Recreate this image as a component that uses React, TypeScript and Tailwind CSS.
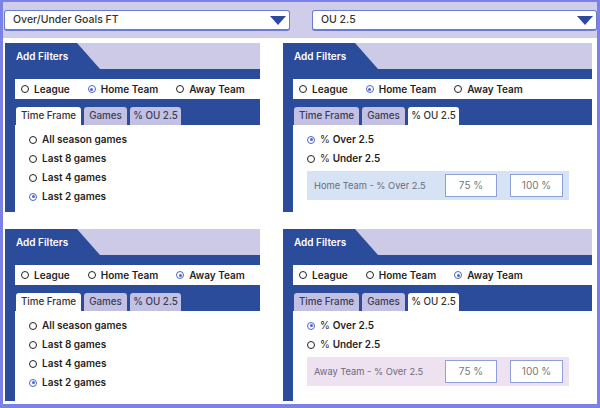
import React from "react";

function Radio({ checked }: { checked?: boolean }) {
  return checked ? (
    <span className="w-[8px] h-[8px] rounded-full border-[1.5px] border-[#4a67c6] flex items-center justify-center shrink-0">
      <span className="w-[3px] h-[3px] rounded-full bg-[#4a67c6]" />
    </span>
  ) : (
    <span className="w-[8px] h-[8px] rounded-full border-[1.5px] border-[#222] shrink-0" />
  );
}

function Select({ label, className }: { label: string; className: string }) {
  return (
    <div
      className={`h-[21px] bg-white rounded-[3px] border border-[#6b7bd3] border-b-2 flex items-center justify-between pl-[8px] pr-[3px] ${className}`}
    >
      <span className="text-[10.5px] font-medium text-[#333]">{label}</span>
      <svg width="16" height="9" viewBox="0 0 16 9">
        <polygon points="0,0 16,0 8,9" fill="#2d4a9e" />
      </svg>
    </div>
  );
}

type PanelProps = {
  team: "home" | "away";
  tab: "time" | "ou";
  className: string;
};

function Panel({ team, tab, className }: PanelProps) {
  const teamName = team === "home" ? "Home Team" : "Away Team";
  const tabs = [
    { id: "time", label: "Time Frame", w: "w-[65px]" },
    { id: "games", label: "Games", w: "w-[43px]" },
    { id: "ou", label: "% OU 2.5", w: "w-[51px]" },
  ];
  return (
    <div className={`flex flex-col ${className}`}>
      <div className="h-[26px] bg-[#cccae6] flex shrink-0">
        <div className="w-[95px] h-full bg-[#2b4b9b] [clip-path:polygon(0_0,72px_0,95px_100%,0_100%)] flex items-center pl-[11px]">
          <span className="text-white font-semibold text-[10px]">Add Filters</span>
        </div>
      </div>
      <div className="flex-1 flex flex-col bg-[#2b4b9b] pl-[10px] pt-[10px]">
        <div className="h-[20px] bg-white flex items-center pl-[6px] gap-[18px] shrink-0">
          {[
            { l: "League", c: false },
            { l: "Home Team", c: team === "home" },
            { l: "Away Team", c: team === "away" },
          ].map((r) => (
            <div key={r.l} className="flex items-center gap-[5px]">
              <Radio checked={r.c} />
              <span className="text-[10px] font-semibold text-[#1f1f1f]">{r.l}</span>
            </div>
          ))}
        </div>
        <div className="mt-[8px] h-[18px] flex gap-[3px] pl-[1px] shrink-0">
          {tabs.map((t) => (
            <div
              key={t.id}
              className={`${t.w} h-full rounded-t-[3px] flex items-center justify-center text-[9.8px] font-medium ${
                t.id === tab ? "bg-white text-[#333]" : "bg-[#c3c1e3] text-[#3a3a55]"
              }`}
            >
              {t.label}
            </div>
          ))}
        </div>
        <div className="flex-1 bg-white pl-[14px] pt-[5px]">
          {tab === "time" ? (
            <div className="flex flex-col">
              {[
                "All season games",
                "Last 8 games",
                "Last 4 games",
                "Last 2 games",
              ].map((g, i) => (
                <div key={g} className="h-[19px] flex items-center gap-[5px]">
                  <Radio checked={i === 3} />
                  <span className="text-[10px] font-semibold text-[#1f1f1f]">{g}</span>
                </div>
              ))}
            </div>
          ) : (
            <div className="flex flex-col">
              <div className="h-[19px] flex items-center gap-[5px]">
                <Radio checked />
                <span className="text-[10px] text-[#1f1f1f]">
                  % <span className="font-semibold">Over 2.5</span>
                </span>
              </div>
              <div className="h-[19px] flex items-center gap-[5px]">
                <Radio />
                <span className="text-[10px] text-[#1f1f1f]">
                  % <span className="font-semibold">Under 2.5</span>
                </span>
              </div>
              <div
                className={`mt-[3px] w-[262px] h-[29px] flex items-center pl-[7px] ${
                  team === "home" ? "bg-[#d5e3f5]" : "bg-[#eee2f1]"
                }`}
              >
                <span className="w-[131px] text-[9.3px] text-[#6b6b7b]">
                  {teamName} - % Over 2.5
                </span>
                <div className="w-[52px] h-[23px] bg-white border border-[#8e9fd9] flex items-center justify-center text-[10px] text-[#777]">
                  75 %
                </div>
                <div className="ml-[13px] w-[53px] h-[23px] bg-white border border-[#8e9fd9] flex items-center justify-center text-[10px] text-[#777]">
                  100 %
                </div>
              </div>
            </div>
          )}
        </div>
      </div>
    </div>
  );
}

export default function App() {
  return (
    <div className="w-[600px] h-[408px] bg-[#cfcde9] border-l-[3px] border-r-[3px] border-t-2 border-b-4 border-[#7b81e6] flex flex-col [font-family:Inter,'Open_Sans',sans-serif]">
      <div className="mt-[8px] flex pl-[1px] gap-[22px] shrink-0">
        <Select label="Over/Under Goals FT" className="w-[286px]" />
        <Select label="OU 2.5" className="w-[285px]" />
      </div>
      <div className="mt-[7px] flex-1 bg-white pl-[2px] pt-[5px] flex flex-col gap-[17px]">
        <div className="flex gap-[23px] h-[169px]">
          <Panel team="home" tab="time" className="w-[255px]" />
          <Panel team="home" tab="ou" className="w-[309px]" />
        </div>
        <div className="flex gap-[23px] h-[172px]">
          <Panel team="away" tab="time" className="w-[255px]" />
          <Panel team="away" tab="ou" className="w-[309px]" />
        </div>
      </div>
    </div>
  );
}
